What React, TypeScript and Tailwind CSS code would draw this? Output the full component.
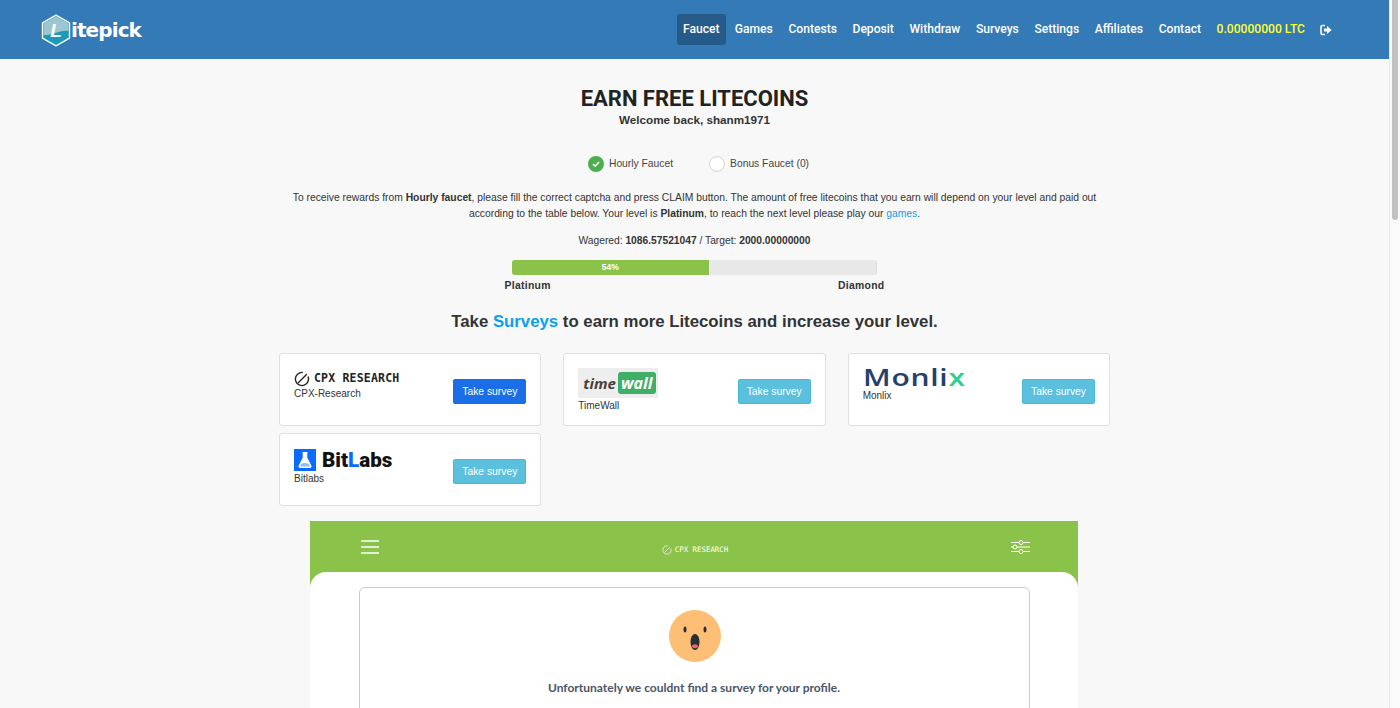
import React from "react";

const NAV = ["Games", "Contests", "Deposit", "Withdraw", "Surveys", "Settings", "Affiliates", "Contact"];

function LogoHex() {
  return (
    <svg width="30" height="33" viewBox="0 0 30 33" className="shrink-0">
      <path d="M15 1.2 L28.5 8.8 V24.2 L15 31.8 L1.5 24.2 V8.8 Z" fill="#1b9bba" stroke="#ffffff" strokeWidth="1.4" strokeLinejoin="round" />
      <path d="M15 2.4 L27.5 9.4 V17 C20 15 10 22 2.5 21 V9.4 Z" fill="#9cc7d2" />
      <text x="15" y="23" textAnchor="middle" fontFamily="'Liberation Sans', sans-serif" fontWeight="700" fontStyle="italic" fontSize="19" fill="#ffffff">L</text>
    </svg>
  );
}

function CpxMark({ size, color, sw }: { size: number; color: string; sw: number }) {
  return (
    <svg width={size} height={size} viewBox="0 0 16 16" className="shrink-0">
      <circle cx="8" cy="8" r="6.6" fill="none" stroke={color} strokeWidth={sw} strokeDasharray="34 7" transform="rotate(-20 8 8)" />
      <path d="M4.5 11.5 L12.5 3.5" stroke={color} strokeWidth={sw} strokeLinecap="round" />
    </svg>
  );
}

function SurveyCard({ logo, name, active, nameGap }: { logo: React.ReactNode; name: string; active?: boolean; nameGap: string }) {
  return (
    <div className="flex h-[73px] items-start justify-between rounded-[3px] border border-[#dfdfdf] bg-white pl-[14px] pr-[14px]">
      <div className={nameGap}>
        {logo}
        <div className="text-[10px] leading-[12px] text-[#333333]">{name}</div>
      </div>
      <button
        className={
          "mt-[25px] flex h-[25px] w-[73px] items-center justify-center rounded-[2px] border text-[10.3px] text-white " +
          (active ? "border-[#1a6ee0] bg-[#1a6ee8]" : "border-[#46b8da] bg-[#5bc0de]")
        }
      >
        Take survey
      </button>
    </div>
  );
}

export default function App() {
  return (
    <div className="flex h-[708px] overflow-hidden bg-[#f8f8f8] font-['Liberation_Sans',Arial,sans-serif] text-[#333333]">
      <div className="w-[1389px] shrink-0">
        <header className="flex h-[59px] items-center justify-between bg-[#337ab7] pl-[41px] pr-[57px]">
          <div className="flex items-center gap-0 pt-[1px]">
            <LogoHex />
            <span className="font-['DejaVu_Sans',sans-serif] text-[20px] font-bold leading-none tracking-[-0.9px] text-white">itepick</span>
          </div>
          <nav className="flex items-center font-['Roboto',sans-serif] text-[12.1px] font-medium text-white">
            <span className="mr-[9px] flex h-[31px] w-[49px] items-center justify-center rounded-[3px] bg-[#265a88]">Faucet</span>
            {NAV.map((n) => (
              <span key={n} className="mr-[15.6px]">{n}</span>
            ))}
            <span className="text-[#ffff2e]">0.00000000 LTC</span>
            <svg width="12" height="12" viewBox="0 0 12 12" className="ml-[15px]">
              <path d="M5 1.5H2.5A1.5 1.5 0 0 0 1 3v6a1.5 1.5 0 0 0 1.5 1.5H5" fill="none" stroke="#ffffff" strokeWidth="1.6" />
              <path d="M4 4.4H7V2L11.6 6 7 10V7.6H4Z" fill="#ffffff" />
            </svg>
          </nav>
        </header>

        <main className="flex flex-col items-center">
          <h1 className="mt-[28px] font-['Roboto',sans-serif] text-[22px] font-bold leading-[24px] text-[#222222]">EARN FREE LITECOINS</h1>
          <p className="mt-[2px] text-[11.7px] font-bold leading-[13px] text-[#333333]">Welcome back, shanm1971</p>

          <div className="ml-[8px] mt-[28px] flex h-[20px] items-center gap-[36px] text-[10.3px] text-[#444444]">
            <div className="flex items-center gap-[5px]">
              <span className="flex h-[16px] w-[16px] items-center justify-center rounded-full bg-[#4cae4c]">
                <svg width="10" height="10" viewBox="0 0 10 10">
                  <path d="M2 5.2 L4.2 7.2 L8 3" fill="none" stroke="#ffffff" strokeWidth="1.6" />
                </svg>
              </span>
              Hourly Faucet
            </div>
            <div className="flex items-center gap-[5px]">
              <span className="h-[16px] w-[16px] rounded-full border border-[#d5d5d5] bg-white" />
              Bonus Faucet (0)
            </div>
          </div>

          <p className="mt-[16px] w-[830px] text-center text-[10.32px] leading-[16px] text-[#333333]">
            To receive rewards from <b>Hourly faucet</b>, please fill the correct captcha and press CLAIM button. The amount of free litecoins that you earn will depend on your level and paid out
            <br />
            according to the table below. Your level is <b>Platinum</b>, to reach the next level please play our <span className="text-[#0aa0f0]">games</span>.
          </p>

          <p className="mt-[11px] text-[10.25px] leading-[16px]">
            Wagered: <b>1086.57521047</b> / Target: <b>2000.00000000</b>
          </p>

          <div className="mt-[11px] w-[380px]">
            <div className="mx-auto flex h-[15px] w-[365px] overflow-hidden rounded-[3px] border-r border-[#dddddd] bg-[#e8e8e8]">
              <div className="flex w-[54%] items-center justify-center bg-[#8bc34a] text-[8.5px] font-bold text-white">54%</div>
            </div>
            <div className="mt-[5px] flex justify-between text-[10.4px] font-bold leading-[12px] tracking-[0.3px]">
              <span>Platinum</span>
              <span>Diamond</span>
            </div>
          </div>

          <h2 className="mt-[19px] text-[16.8px] font-bold leading-[22px] text-[#333333]">
            Take <span className="text-[#0aa0f0]">Surveys</span> to earn more Litecoins and increase your level.
          </h2>

          <div className="mt-[20px] grid w-[831px] grid-cols-3 gap-x-[22px] gap-y-[7px]">
            <SurveyCard
              active
              name="CPX-Research"
              nameGap="pt-[16px]"
              logo={
                <div className="flex h-[18px] items-center gap-[4px] pb-[1px]">
                  <CpxMark size={16} color="#222222" sw={1.4} />
                  <span className="font-['DejaVu_Sans_Mono',monospace] text-[11.5px] font-bold leading-none tracking-[0.2px] text-[#222222]">CPX RESEARCH</span>
                </div>
              }
            />
            <SurveyCard
              name="TimeWall"
              nameGap="pt-[14px]"
              logo={
                <div className="mb-[2px] flex h-[30px] w-[80px] items-center bg-[#eeeeee] pl-[5px]">
                  <span className="font-['Open_Sans',sans-serif] text-[15px] font-bold italic leading-none text-[#4a3f38]">time</span>
                  <span className="ml-[2px] rounded-[3px] bg-[#3fae66] px-[3px] py-[3px] font-['Open_Sans',sans-serif] text-[16px] font-bold italic leading-none text-white">wall</span>
                </div>
              }
            />
            <SurveyCard
              name="Monlix"
              nameGap="pt-[11px]"
              logo={
                <div className="mb-[1px] h-[24px] origin-left scale-x-[1.25] font-['Open_Sans',sans-serif] text-[24px] font-semibold leading-[24px] tracking-[0.6px] text-[#25406b]">
                  Monli<span className="text-[#2ecf8e]">x</span>
                </div>
              }
            />
            <SurveyCard
              name="Bitlabs"
              nameGap="pt-[15px]"
              logo={
                <div className="mb-[2px] flex h-[22px] items-center gap-[6px]">
                  <span className="flex h-[22px] w-[22px] items-center justify-center bg-[#0a6cff]">
                    <svg width="16" height="18" viewBox="0 0 16 18">
                      <path d="M5.5 1.5h5M6.2 1.5v5.2L2 15a1 1 0 0 0 .9 1.5h10.2A1 1 0 0 0 14 15L9.8 6.7V1.5" fill="#ffffff" stroke="#ffffff" strokeWidth="1" />
                      <path d="M4 13c2.500-1.500 5-1.500 8 0l1 2.500H3Z" fill="#8dbbff" />
                    </svg>
                  </span>
                  <span className="font-['Roboto',sans-serif] text-[20.6px] font-black leading-none text-[#111111]">
                    Bit<span className="text-[#0a6cff]">L</span>abs
                  </span>
                </div>
              }
            />
          </div>

          <section className="mr-[2px] mt-[15px] h-[187px] w-[768px] overflow-hidden bg-[#8bc34a]">
            <div className="flex h-[51px] items-center justify-between pl-[51px] pr-[48px]">
              <svg width="18" height="14" viewBox="0 0 18 14">
                <path d="M0 1h18M0 7h18M0 13h18" stroke="#ffffff" strokeWidth="1.5" />
              </svg>
              <div className="ml-[1px] mt-[6px] flex items-center gap-[3px] text-white">
                <CpxMark size={10} color="#ffffff" sw={1} />
                <span className="font-['DejaVu_Sans_Mono',monospace] text-[7.4px] leading-none">CPX RESEARCH</span>
              </div>
              <svg width="19" height="14" viewBox="0 0 19 14" fill="none" stroke="#ffffff" strokeWidth="1">
                <path d="M0 2.500h8M12 2.500h7M0 7h2M6 7h13M0 11.500h8M12 11.500h7" />
                <circle cx="10" cy="2.500" r="2" />
                <circle cx="4" cy="7" r="2" />
                <circle cx="10" cy="11.500" r="2" />
              </svg>
            </div>
            <div className="h-[136px] rounded-t-[16px] bg-white pl-[49px] pr-[48px] pt-[15px]">
              <div className="flex h-[140px] flex-col items-center rounded-[6px] border border-[#c5ccd6] pt-[22px]">
                <svg width="52" height="52" viewBox="0 0 52 52" className="ml-[2px]">
                  <circle cx="26" cy="26" r="26" fill="#fdbf75" />
                  <ellipse cx="16" cy="19.500" rx="1.500" ry="3" fill="#2a2f36" />
                  <ellipse cx="36" cy="19.500" rx="1.500" ry="3" fill="#2a2f36" />
                  <ellipse cx="26" cy="32" rx="4.500" ry="8" fill="#2a2f36" />
                  <path d="M22.500 36.500a3.800 3.800 0 0 1 7 0a4.500 4.500 0 0 1-7 0Z" fill="#f2646e" />
                </svg>
                <p className="mt-[18px] font-['Lato',sans-serif] text-[12px] font-bold leading-[16px] text-[#4a5568]">
                  Unfortunately we couldnt find a survey for your profile.
                </p>
              </div>
            </div>
          </section>
        </main>
      </div>

      <div className="h-full flex-1 border-l border-[#e8e8e8] bg-[#fafafa] pl-[2px] pr-[2px]">
        <div className="h-[220px] w-[6px] rounded-b-[3px] bg-[#c1c1c1]" />
      </div>
    </div>
  );
}
